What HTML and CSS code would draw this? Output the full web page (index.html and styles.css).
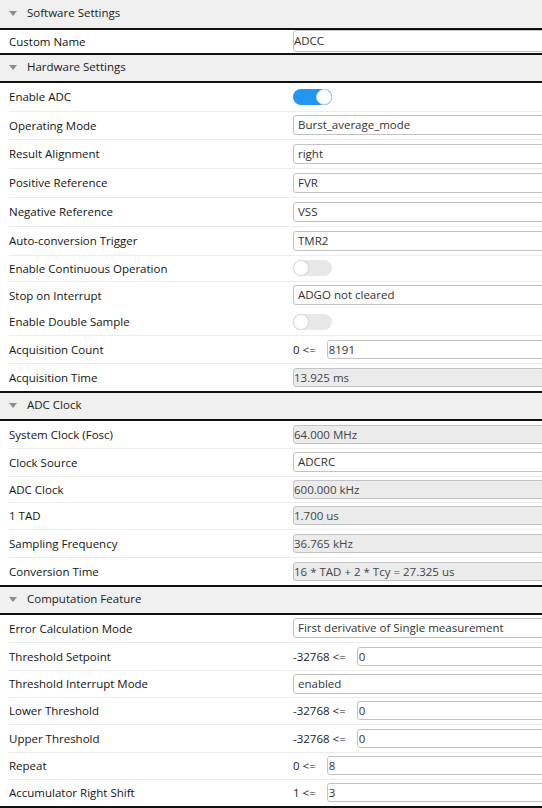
FILE: index.html
```html
<!DOCTYPE html>
<html>
<head>
<meta charset="utf-8">
<title>ADCC Settings</title>
<link rel="stylesheet" href="styles.css">
</head>
<body>
<div class="panel">
  <section class="group">
    <div class="group-head group-head--first"><span class="caret"></span>Software Settings</div>
    <div class="row h23"><div class="label">Custom Name</div><div class="value"><div class="field field--text">ADCC</div></div></div>
  </section>

  <section class="group">
    <div class="group-head"><span class="caret"></span>Hardware Settings</div>
    <div class="row h28"><div class="label">Enable ADC</div><div class="value"><span class="toggle toggle--on"><span class="knob"></span></span></div></div>
    <div class="row h28"><div class="label">Operating Mode</div><div class="value"><div class="field field--select">Burst_average_mode</div></div></div>
    <div class="row h29"><div class="label">Result Alignment</div><div class="value"><div class="field field--select">right</div></div></div>
    <div class="row h29"><div class="label">Positive Reference</div><div class="value"><div class="field field--select">FVR</div></div></div>
    <div class="row h29"><div class="label">Negative Reference</div><div class="value"><div class="field field--select">VSS</div></div></div>
    <div class="row h29"><div class="label">Auto-conversion Trigger</div><div class="value"><div class="field field--select">TMR2</div></div></div>
    <div class="row h26"><div class="label">Enable Continuous Operation</div><div class="value"><span class="toggle"><span class="knob"></span></span></div></div>
    <div class="row h28"><div class="label">Stop on Interrupt</div><div class="value"><div class="field field--select">ADGO not cleared</div></div></div>
    <div class="row h26 row--nosep"><div class="label">Enable Double Sample</div><div class="value"><span class="toggle"><span class="knob"></span></span></div></div>
    <div class="row h28"><div class="label">Acquisition Count</div><div class="value range"><span class="range-min">0 &lt;=</span><div class="field field--number">8191</div></div></div>
    <div class="row h28"><div class="label">Acquisition Time</div><div class="value"><div class="field field--readonly">13.925 ms</div></div></div>
  </section>

  <section class="group">
    <div class="group-head"><span class="caret"></span>ADC Clock</div>
    <div class="row h27"><div class="label">System Clock (Fosc)</div><div class="value"><div class="field field--readonly">64.000 MHz</div></div></div>
    <div class="row h28"><div class="label">Clock Source</div><div class="value"><div class="field field--select">ADCRC</div></div></div>
    <div class="row h26"><div class="label">ADC Clock</div><div class="value"><div class="field field--readonly">600.000 kHz</div></div></div>
    <div class="row h27"><div class="label">1 TAD</div><div class="value"><div class="field field--readonly">1.700 us</div></div></div>
    <div class="row h28"><div class="label">Sampling Frequency</div><div class="value"><div class="field field--readonly">36.765 kHz</div></div></div>
    <div class="row h28"><div class="label">Conversion Time</div><div class="value"><div class="field field--readonly">16 * TAD + 2 * Tcy = 27.325 us</div></div></div>
  </section>

  <section class="group">
    <div class="group-head"><span class="caret"></span>Computation Feature</div>
    <div class="row h27"><div class="label">Error Calculation Mode</div><div class="value"><div class="field field--select">First derivative of Single measurement</div></div></div>
    <div class="row h28"><div class="label">Threshold Setpoint</div><div class="value range"><span class="range-min">-32768 &lt;=</span><div class="field field--number">0</div></div></div>
    <div class="row h27"><div class="label">Threshold Interrupt Mode</div><div class="value"><div class="field field--select">enabled</div></div></div>
    <div class="row h27"><div class="label">Lower Threshold</div><div class="value range"><span class="range-min">-32768 &lt;=</span><div class="field field--number">0</div></div></div>
    <div class="row h28"><div class="label">Upper Threshold</div><div class="value range"><span class="range-min">-32768 &lt;=</span><div class="field field--number">0</div></div></div>
    <div class="row h27"><div class="label">Repeat</div><div class="value range"><span class="range-min">0 &lt;=</span><div class="field field--number">8</div></div></div>
    <div class="row h27"><div class="label">Accumulator Right Shift</div><div class="value range"><span class="range-min">1 &lt;=</span><div class="field field--number">3</div></div></div>
  </section>
</div>
</body>
</html>
```

FILE: styles.css
```css
html, body {
  margin: 0;
  padding: 0;
}

body {
  width: 542px;
  height: 808px;
  overflow: hidden;
  background: #ffffff;
  font-family: "Open Sans", "Noto Sans", sans-serif;
  font-size: 11.5px;
  color: #141414;
}

.panel {
  border-bottom: 2px solid #111;
}

.group + .group {
  border-top: 2px solid #111;
}

.group-head {
  box-sizing: border-box;
  height: 28px;
  display: flex;
  align-items: center;
  gap: 10px;
  padding-left: 9px;
  padding-bottom: 3px;
  background: #f0f0f0;
  border-bottom: 2px solid #111;
  color: #1a1a1a;
}

.group-head--first {
  height: 30px;
}

.caret {
  width: 0;
  height: 0;
  border-left: 4px solid transparent;
  border-right: 4px solid transparent;
  border-top: 5px solid #8c8c8c;
  margin-top: 1px;
}

.row {
  box-sizing: border-box;
  margin-left: 9px;
  padding-bottom: 1px;
  display: grid;
  grid-template-columns: 284px 1fr;
  align-items: center;
  border-top: 1px solid #ececec;
}

.group-head + .row,
.row--nosep {
  border-top: none;
}

.h23 { height: 23px; }
.h26 { height: 26px; }
.h27 { height: 27px; }
.h28 { height: 28px; }
.h29 { height: 29px; }

.label {
  white-space: nowrap;
}

.value {
  min-width: 0;
}

.range {
  display: flex;
  align-items: center;
  gap: 11px;
}

.range-min {
  white-space: nowrap;
  color: #222;
}

.field {
  box-sizing: border-box;
  width: calc(100% + 20px);
  border: 1px solid #c2c2c2;
  border-radius: 3px;
  background: #fff;
  white-space: nowrap;
  overflow: hidden;
  color: #333;
}

.range .field {
  flex: 1;
  width: auto;
  margin-right: -20px;
}

.field--text {
  height: 22px;
  line-height: 20px;
  padding-left: 0;
}

.field--select {
  height: 20px;
  line-height: 18px;
  padding-left: 4px;
}

.field--number {
  height: 19px;
  line-height: 17px;
  padding-left: 1px;
}

.field--readonly {
  height: 19px;
  line-height: 17px;
  padding-left: 0;
  background: #ebebeb;
  color: #444;
}

.toggle {
  position: relative;
  display: block;
  box-sizing: border-box;
  width: 39px;
  height: 16px;
  border-radius: 8px;
  background: #e6e8ea;
}

.knob {
  position: absolute;
  top: 0;
  left: 0;
  box-sizing: border-box;
  width: 16px;
  height: 16px;
  border-radius: 50%;
  background: #fff;
  border: 1px solid #dcdcdc;
  box-shadow: 0 0 1px rgba(0, 0, 0, 0.1);
}

.toggle--on {
  background: #2196f3;
}

.toggle--on .knob {
  left: auto;
  right: 0;
  border-color: #bcdcf8;
}
```
